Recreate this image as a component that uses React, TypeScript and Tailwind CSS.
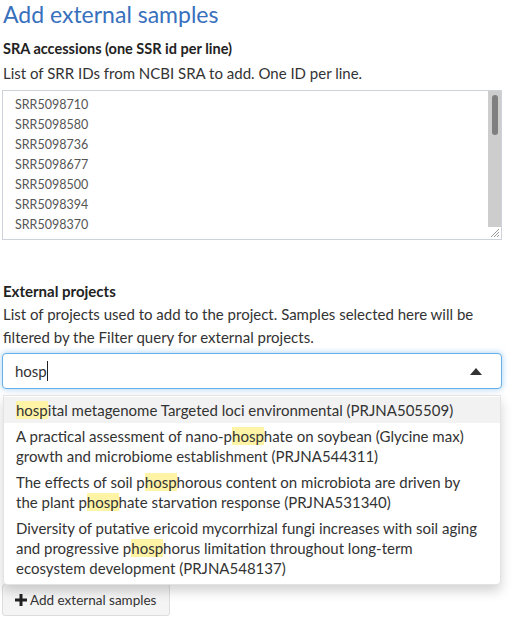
import React from "react";

const ids = ["SRR5098710", "SRR5098580", "SRR5098736", "SRR5098677", "SRR5098500", "SRR5098394", "SRR5098370"];

// each option: lines, each line split as [plain, match, plain, ...]
const options: { lines: string[][]; active?: boolean }[] = [
  { lines: [["", "hosp", "ital metagenome Targeted loci environmental (PRJNA505509)"]], active: true },
  {
    lines: [
      ["A practical assessment of nano-p", "hosp", "hate on soybean (Glycine max)"],
      ["growth and microbiome establishment (PRJNA544311)"],
    ],
  },
  {
    lines: [
      ["The effects of soil p", "hosp", "horous content on microbiota are driven by"],
      ["the plant p", "hosp", "hate starvation response (PRJNA531340)"],
    ],
  },
  {
    lines: [
      ["Diversity of putative ericoid mycorrhizal fungi increases with soil aging"],
      ["and progressive p", "hosp", "horus limitation throughout long-term"],
      ["ecosystem development (PRJNA548137)"],
    ],
  },
];

export default function App() {
  return (
    <div className="w-[519px] h-[623px] overflow-hidden bg-white text-[15px] text-[#333] font-['Lato',sans-serif]">
      <div className="pl-[3px] pr-[17px]">
        <h2 className="text-[23px] leading-[28px] text-[#3870bd]">Add external samples</h2>
        <div className="mt-[11px] font-bold text-[14.5px] text-[#222] leading-[20px]">SRA accessions (one SSR id per line)</div>
        <div className="mt-[4px] leading-[20px]">List of SRR IDs from NCBI SRA to add. One ID per line.</div>
        <div className="relative mt-[7px] -ml-px h-[150px] border border-[#ccd3db] bg-white">
          <div className="pl-[12px] pt-[4px] text-[12.5px] leading-[20px] text-[#555]">
            {ids.map((id) => (
              <div key={id}>{id}</div>
            ))}
          </div>
          <div className="absolute right-0 top-0 w-[13px] h-[136px] bg-[#cdcdcd]">
            <div className="mx-auto mt-[4px] w-[6px] h-[40px] rounded-full bg-[#7f7f7f]" />
          </div>
          <svg className="absolute right-[1px] bottom-[1px]" width="11" height="11" viewBox="0 0 11 11">
            <path d="M10 2 L2 10 M10 5 L5 10 M10 8 L8 10" stroke="#999" strokeWidth="1" />
          </svg>
        </div>
        <div className="mt-[41px] font-bold text-[#222] leading-[20px]">External projects</div>
        <div className="mt-[2px] leading-[23px]">
          List of projects used to add to the project. Samples selected here will be filtered by the Filter query for external projects.
        </div>
        <div className="relative mt-[4px] -ml-px">
          <div className="flex items-center h-[36px] rounded-[4px] border border-[#66afe9] shadow-[0_0_6px_rgba(102,175,233,0.6)] bg-white pl-[12px] pr-[19px]">
            <span className="text-[#333]">hosp</span>
            <span className="w-px h-[20px] bg-[#222]" />
            <svg className="ml-auto" width="12" height="7" viewBox="0 0 12 7">
              <path d="M0 7 L6 0 L12 7 Z" fill="#333" />
            </svg>
          </div>
          <div className="absolute left-[1px] right-[1px] top-[42px] z-10 rounded-b-[4px] border border-[#e3e3e3] bg-white shadow-[0_6px_12px_rgba(0,0,0,0.175)] pt-[1px] pb-[3px] leading-[20px]">
            {options.map((o, i) => (
              <div key={i} className={`px-[12px] py-[3px] whitespace-nowrap ${o.active ? "bg-[#f2f2f2]" : ""}`}>
                {o.lines.map((line, k) => (
                  <div key={k}>
                    {line.map((p, j) =>
                      j % 2 === 1 ? (
                        <span key={j} className="bg-[#fff4a6]">{p}</span>
                      ) : (
                        <span key={j}>{p}</span>
                      )
                    )}
                  </div>
                ))}
              </div>
            ))}
          </div>
        </div>
        <button className="mt-[195px] -ml-px flex items-center gap-[3px] h-[32px] pl-[12px] pr-[13px] rounded-[3px] border border-[#ddd] bg-[#f4f4f4] text-[13.5px] text-[#333]">
          <svg width="12" height="12" viewBox="0 0 12 12">
            <path d="M4.5 0 H7.5 V4.5 H12 V7.5 H7.5 V12 H4.5 V7.5 H0 V4.5 H4.5 Z" fill="#222" />
          </svg>
          <span>Add external samples</span>
        </button>
      </div>
    </div>
  );
}
